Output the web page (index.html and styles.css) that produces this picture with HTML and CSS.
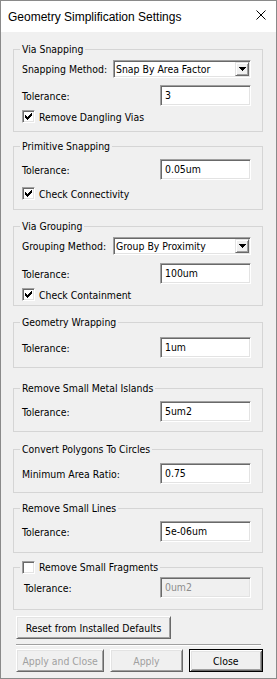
FILE: index.html
```html
<!DOCTYPE html>
<html>
<head>
<meta charset="utf-8">
<title>Geometry Simplification Settings</title>
<link rel="stylesheet" href="styles.css">
</head>
<body>
<div class="window">
  <div class="titlebar">
    <span class="title">Geometry Simplification Settings</span>
    <svg class="close" width="10" height="10" viewBox="0 0 10 10"><path d="M0.5 0.5L9.5 9.5M9.5 0.5L0.5 9.5" stroke="#000" stroke-width="1" fill="none"/></svg>
  </div>
  <div class="client">
    <fieldset class="group g1">
      <legend>Via Snapping</legend>
      <div class="row"><span>Snapping Method:</span><div class="combo"><span class="combo-text">Snap By Area Factor</span><span class="combo-btn"><svg width="7" height="4" viewBox="0 0 7 4"><path d="M0 0h7v1h-1v1h-1v1h-1v1h-1v-1h-1v-1h-1v-1H0z" fill="#000"/></svg></span></div></div>
      <div class="row r-edit"><span>Tolerance:</span><div class="edit">3</div></div>
      <div class="check r-check"><span class="box"><svg width="7" height="7" viewBox="0 0 7 7"><path d="M0 2h1v3H0zM1 3h1v3H1zM2 4h1v3H2zM3 3h1v3H3zM4 2h1v3H4zM5 1h1v3H5zM6 0h1v3H6z" fill="#000"/></svg></span><span>Remove Dangling Vias</span></div>
    </fieldset>

    <fieldset class="group g2">
      <legend>Primitive Snapping</legend>
      <div class="row"><span>Tolerance:</span><div class="edit">0.05um</div></div>
      <div class="check r-check2"><span class="box"><svg width="7" height="7" viewBox="0 0 7 7"><path d="M0 2h1v3H0zM1 3h1v3H1zM2 4h1v3H2zM3 3h1v3H3zM4 2h1v3H4zM5 1h1v3H5zM6 0h1v3H6z" fill="#000"/></svg></span><span>Check Connectivity</span></div>
    </fieldset>

    <fieldset class="group g3">
      <legend>Via Grouping</legend>
      <div class="row"><span>Grouping Method:</span><div class="combo"><span class="combo-text">Group By Proximity</span><span class="combo-btn"><svg width="7" height="4" viewBox="0 0 7 4"><path d="M0 0h7v1h-1v1h-1v1h-1v1h-1v-1h-1v-1h-1v-1H0z" fill="#000"/></svg></span></div></div>
      <div class="row r-edit3"><span>Tolerance:</span><div class="edit">100um</div></div>
      <div class="check r-check"><span class="box"><svg width="7" height="7" viewBox="0 0 7 7"><path d="M0 2h1v3H0zM1 3h1v3H1zM2 4h1v3H2zM3 3h1v3H3zM4 2h1v3H4zM5 1h1v3H5zM6 0h1v3H6z" fill="#000"/></svg></span><span>Check Containment</span></div>
    </fieldset>

    <fieldset class="group g4">
      <legend>Geometry Wrapping</legend>
      <div class="row"><span>Tolerance:</span><div class="edit">1um</div></div>
    </fieldset>

    <fieldset class="group g5">
      <legend>Remove Small Metal Islands</legend>
      <div class="row"><span>Tolerance:</span><div class="edit">5um2</div></div>
    </fieldset>

    <fieldset class="group g6">
      <legend>Convert Polygons To Circles</legend>
      <div class="row"><span>Minimum Area Ratio:</span><div class="edit">0.75</div></div>
    </fieldset>

    <fieldset class="group g7">
      <legend>Remove Small Lines</legend>
      <div class="row"><span>Tolerance:</span><div class="edit">5e-06um</div></div>
    </fieldset>

    <fieldset class="group g8">
      <legend><span class="check"><span class="box"></span><span>Remove Small Fragments</span></span></legend>
      <div class="row"><span class="indent">Tolerance:</span><div class="edit disabled">0um2</div></div>
    </fieldset>

    <button class="btn reset">Reset from Installed Defaults</button>
    <div class="sep"></div>
    <div class="actions">
      <button class="btn b-applyclose" disabled>Apply and Close</button>
      <button class="btn b-apply" disabled>Apply</button>
      <button class="btn b-close default">Close</button>
    </div>
  </div>
</div>
</body>
</html>
```

FILE: styles.css
```css
* { box-sizing: border-box; }
html, body { margin: 0; padding: 0; background: #f0f0f0; }
body {
  width: 277px; height: 679px; overflow: hidden;
  font-family: "DejaVu Sans Condensed", "Liberation Sans", sans-serif;
  font-size: 10.4px; color: #000;
}
.window {
  width: 277px; height: 679px;
  border: 1px solid #8a8a8a;
  display: flex; flex-direction: column;
  background: #f0f0f0;
}
.titlebar {
  flex: none; height: 31px; background: #fff;
  display: flex; align-items: center; justify-content: space-between;
  padding: 0 10px 0 7px;
  font-family: "Liberation Sans", sans-serif; font-size: 12px;
}
.close { display: block; margin-top: -3px; }
.client {
  flex: 1; display: flex; flex-direction: column;
  padding: 11px 13px 0 12px;
}
.group {
  margin: 0; min-width: 0;
  border: 1px solid #d5d5d5;
  padding: 4px 11px 8px 8px;
  display: flex; flex-direction: column;
}
.group legend {
  padding: 0 2px; margin-left: -2px;
  height: 13px; line-height: 13px;
}
.row { display: flex; align-items: center; justify-content: space-between; }
.edit {
  width: 91px; height: 21px; background: #fff;
  border: 1px solid; border-color: #a0a0a0 #fff #fff #a0a0a0;
  box-shadow: inset 1px 1px #696969, inset -1px -1px #e3e3e3;
  padding: 0 4px; line-height: 19px; white-space: nowrap;
}
.edit.disabled { background: #f0f0f0; color: #8d8d8d; }
.combo {
  width: 138px; height: 18px; background: #fff;
  border: 1px solid; border-color: #a0a0a0 #fff #fff #a0a0a0;
  box-shadow: inset 1px 1px #696969, inset -1px -1px #e3e3e3;
  padding: 1px 1px 1px 2px;
  display: flex; align-items: center; justify-content: space-between;
}
.combo-btn {
  width: 14px; height: 14px; background: #f0f0f0;
  border: 1px solid; border-color: #e3e3e3 #696969 #696969 #e3e3e3;
  box-shadow: inset 1px 1px #fff, inset -1px -1px #a0a0a0;
  display: flex; align-items: center; justify-content: center;
}
.combo-btn svg { display: block; }
.check { display: flex; align-items: center; gap: 4px; }
.box {
  flex: none; width: 13px; height: 13px; background: #fff;
  border: 1px solid; border-color: #a0a0a0 #fff #fff #a0a0a0;
  box-shadow: inset 1px 1px #696969, inset -1px -1px #e3e3e3;
  display: flex; align-items: center; justify-content: center;
}
.box svg { display: block; }
.indent { padding-left: 2px; }

/* per-group spacing */
.g1 { padding-top: 4px; padding-bottom: 8px; }
.g1 .r-edit { margin-top: 7px; }
.g1 .r-check { margin-top: 4px; }
.g2 { margin-top: 8px; padding-top: 6px; padding-bottom: 9px; }
.g2 .r-check2 { margin-top: 7px; }
.g3 { margin-top: 10px; padding-top: 4px; padding-bottom: 4px; }
.g3 .r-edit3 { margin-top: 8px; }
.g3 .r-check { margin-top: 4px; }
.g4 { margin-top: 10px; padding-top: 8px; padding-bottom: 9px; }
.g5 { margin-top: 14px; padding-top: 6px; padding-bottom: 9px; }
.g6 { margin-top: 11px; padding-top: 7px; padding-bottom: 8px; }
.g7 { margin-top: 9px; padding-top: 6px; padding-bottom: 10px; }
.g8 { margin-top: 8px; padding-top: 3px; padding-bottom: 11px; }

.btn {
  font: inherit; color: #000; margin: 0; padding: 0;
  height: 23px; background: #f0f0f0;
  border: 1px solid; border-color: #fff #696969 #696969 #fff;
  box-shadow: inset 1px 1px #e3e3e3, inset -1px -1px #a0a0a0;
}
.btn:disabled { color: #a0a0a0; }
.btn.default {
  border-color: #000;
  box-shadow: inset 1px 1px #fff, inset -1px -1px #696969, inset 2px 2px #e3e3e3, inset -2px -2px #a0a0a0;
}
.reset { align-self: flex-start; width: 155px; margin: 6px 0 0 3px; }
.sep {
  height: 2px; margin: 5px 2px 0 3px;
  border-top: 1px solid #a0a0a0; border-bottom: 1px solid #fff;
}
.actions { display: flex; gap: 6px; margin: 3px 0 0 3px; }
.b-applyclose { width: 89px; }
.b-apply { width: 73px; }
.b-close { width: 75px; }
```
